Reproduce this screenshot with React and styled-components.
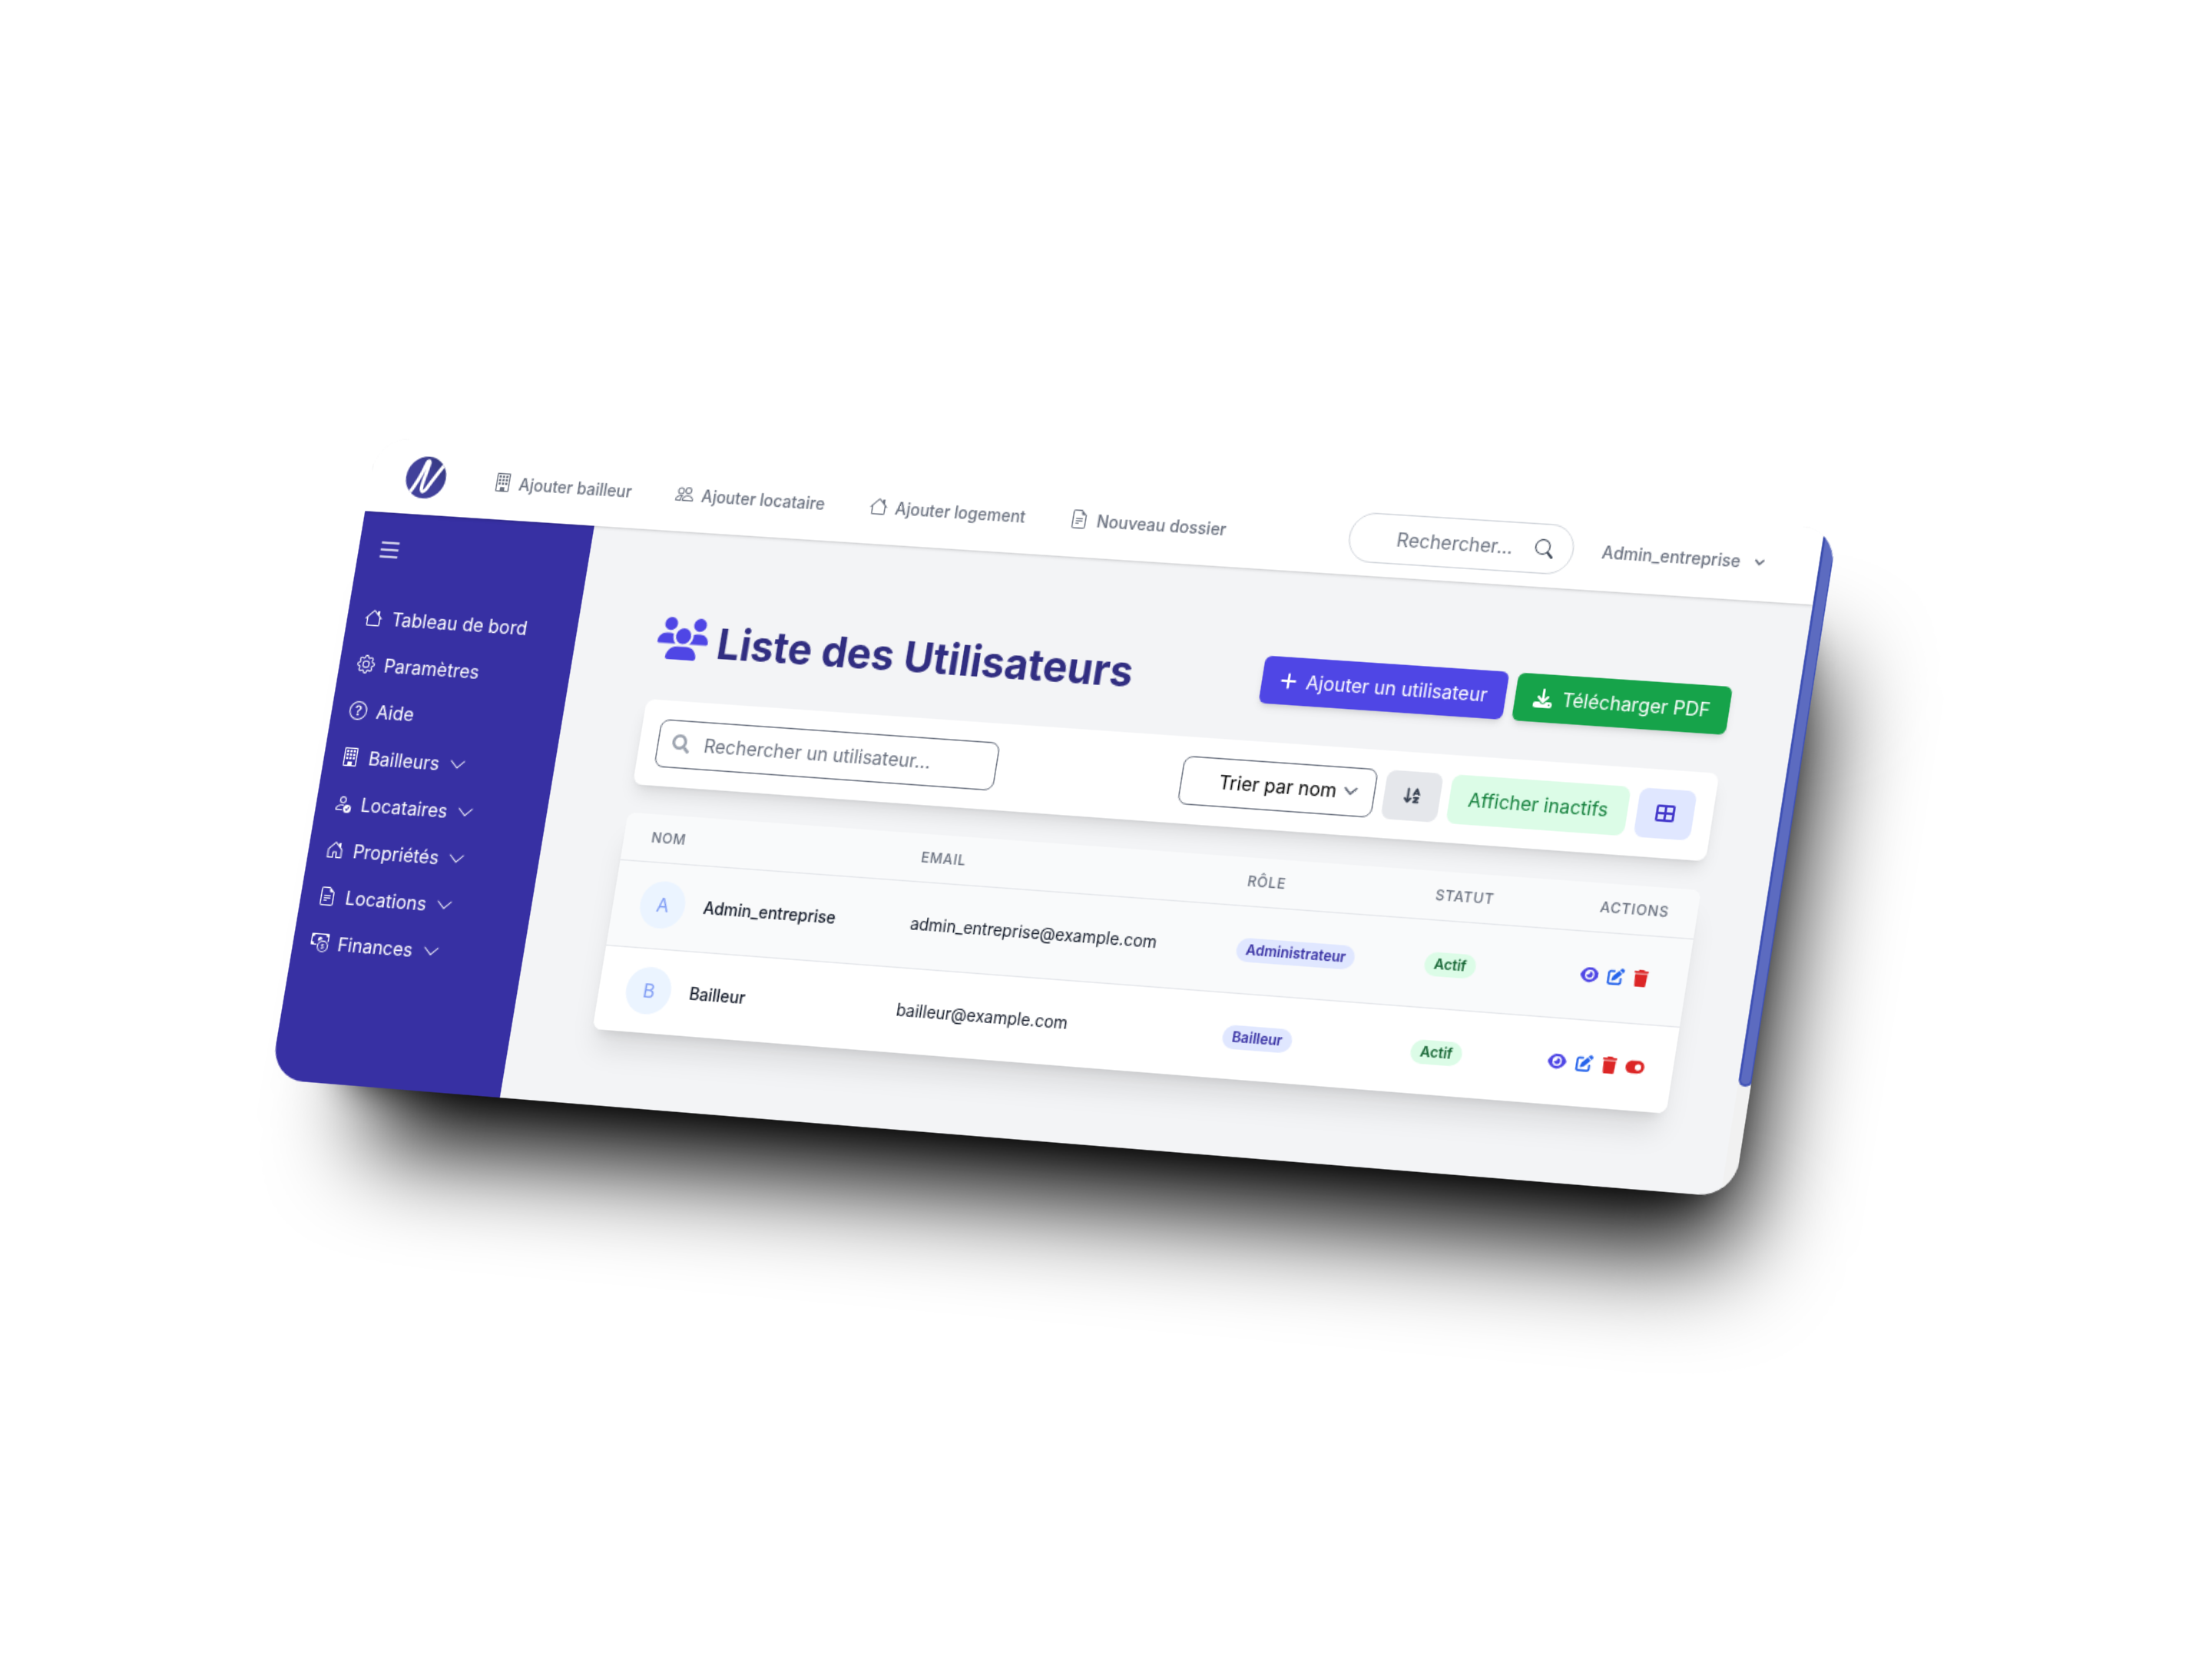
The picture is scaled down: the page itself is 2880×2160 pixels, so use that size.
import React from "react";
import styled, { createGlobalStyle, css } from "styled-components";
import {
  BsBuilding,
  BsCashCoin,
  BsChevronDown,
  BsFileEarmarkText,
  BsGear,
  BsHouse,
  BsHouseDoor,
  BsList,
  BsPeople,
  BsPersonCheck,
  BsQuestionCircle,
  BsSearch,
} from "react-icons/bs";
import { FaSearch } from "react-icons/fa";
import {
  FaArrowDownAZ,
  FaDownload,
  FaEye,
  FaPenToSquare,
  FaPlus,
  FaTableCellsLarge,
  FaToggleOn,
  FaTrash,
  FaUsers,
} from "react-icons/fa6";

const VIEW_W = 1270;
const NAV_H = 64;
const BODY_H = 490;

/* Screen positions of the corners of the area below the navbar. */
const CORNERS = {
  tl: [475.3, 665.3],
  tr: [2360.2, 787.3],
  br: [2240, 1557.7],
  bl: [351.8, 1404.9],
};

function projection({ tl, tr, br, bl }) {
  const [x0, y0] = tl;
  const [x1, y1] = tr;
  const [x2, y2] = br;
  const [x3, y3] = bl;
  const dx1 = x1 - x2;
  const dx2 = x3 - x2;
  const dx3 = x0 - x1 + x2 - x3;
  const dy1 = y1 - y2;
  const dy2 = y3 - y2;
  const dy3 = y0 - y1 + y2 - y3;
  const den = dx1 * dy2 - dx2 * dy1;
  const g = (dx3 * dy2 - dx2 * dy3) / den;
  const h = (dx1 * dy3 - dx3 * dy1) / den;
  const row = (p, q, r) => {
    const px = p / VIEW_W;
    const py = q / BODY_H;
    return [px, py, r - py * NAV_H];
  };
  const X = row(x1 - x0 + g * x1, x3 - x0 + h * x3, x0);
  const Y = row(y1 - y0 + g * y1, y3 - y0 + h * y3, y0);
  const W = row(g, h, 1);
  const k = W[2];
  const n = (v) => (v / k).toFixed(10);
  return `matrix3d(${n(X[0])},${n(Y[0])},0,${n(W[0])},${n(X[1])},${n(Y[1])},0,${n(
    W[1]
  )},0,0,1,0,${n(X[2])},${n(Y[2])},0,1)`;
}

const GlobalStyle = createGlobalStyle`
  *, *::before, *::after { box-sizing: border-box; }
  body { margin: 0; background: #fff; }
  button, input { font: inherit; }
  svg { display: block; flex: none; }
`;

const Stage = styled.div`
  width: 2880px;
  height: 2160px;
  overflow: hidden;
  background: #fff;
  font-family: Inter, "Liberation Sans", sans-serif;
  font-size: 16px;
  line-height: 24px;
  color: #111827;
`;

/* The cast shadow has a wide soft part and a tighter core under the window. */
const Browser = styled.div`
  position: relative;
  width: ${VIEW_W + 11}px;
  height: ${NAV_H + BODY_H}px;
  border-radius: 30px;
  transform-origin: 0 0;
  transform: ${projection(CORNERS)};

  &::before,
  &::after {
    content: "";
    position: absolute;
    z-index: -1;
    background: #000;
  }

  &::before {
    inset: 118px -7px -46px 96px;
    border-radius: 20px;
    filter: blur(43px);
  }

  &::after {
    inset: 88px 18px 6px 66px;
    border-radius: 24px;
    filter: blur(17px);
  }
`;

const Viewport = styled.div`
  display: flex;
  width: 100%;
  height: 100%;
  border-radius: 30px;
  overflow: hidden;
  background: #f3f4f6;
`;

const Page = styled.div`
  display: flex;
  flex-direction: column;
  width: ${VIEW_W}px;
  flex: none;
`;

const ScrollTrack = styled.div`
  flex: 1;
  overflow: hidden;
  background: #f1f1f1;
`;

const ScrollThumb = styled.div`
  width: 11.5px;
  height: 463px;
  border: 2px solid #3f51b5;
  border-top: 0;
  border-radius: 0 0 8px 8px;
  background: #5c6bc0;
`;

const Navbar = styled.header`
  position: relative;
  z-index: 1;
  display: flex;
  align-items: center;
  height: ${NAV_H}px;
  padding: 0 32px;
  background: #fff;
  box-shadow: 0 1px 3px rgba(0, 0, 0, 0.12), 0 1px 2px -1px rgba(0, 0, 0, 0.12);
`;

const NavLinks = styled.nav`
  display: flex;
  gap: 39.65px;
  margin-left: 43.6px;
  flex: 1;
`;

const NavLink = styled.a`
  display: flex;
  align-items: center;
  gap: 7px;
  font-size: 14px;
  line-height: 20px;
  font-weight: 500;
  color: #6b7280;

  svg {
    margin-top: -1px;
  }

  span {
    padding-top: 1px;
  }
`;

const NavSearch = styled.label`
  display: flex;
  align-items: center;
  justify-content: space-between;
  width: 193px;
  height: 42px;
  padding: 0 16px 0 40px;
  border: 1px solid #d1d5db;
  border-radius: 21px;
  color: #6b7280;

  svg {
    color: #374151;
  }
`;

const UserMenu = styled.div`
  display: flex;
  align-items: center;
  gap: 8px;
  margin-left: 12px;
  padding: 0 10px 0 12px;
  font-size: 14px;
  line-height: 20px;
  font-weight: 500;
  color: #6b7280;
`;

const Body = styled.div`
  display: flex;
  height: ${BODY_H}px;
`;

const Sidebar = styled.aside`
  width: 208.4px;
  flex: none;
  padding: 20px 16px 20px 16.4px;
  background: #3730a3;
  color: #fff;
`;

const Menu = styled.ul`
  display: flex;
  flex-direction: column;
  gap: 16px;
  margin: 35.3px 0 0;
  padding: 0;
  list-style: none;
`;

const MenuItem = styled.li`
  display: flex;
  align-items: center;
  gap: 8px;
  height: 24px;
  white-space: nowrap;
`;

const Main = styled.main`
  flex: 1;
  min-width: 0;
  padding: 72px 56px 0 72px;
`;

const TitleRow = styled.div`
  display: flex;
  align-items: center;
  justify-content: space-between;
  height: 40px;
`;

const Title = styled.h1`
  display: flex;
  align-items: center;
  gap: 8.4px;
  margin: 0;
  padding: 1px 0 0 0.8px;
  font-size: 36px;
  line-height: 40px;
  font-weight: 700;
  color: #312e81;
  white-space: nowrap;

  svg {
    width: 45px;
    height: 36px;
    margin-top: -2.5px;
    color: #4f46e5;
  }
`;

const ButtonGroup = styled.div`
  display: flex;
  gap: 8px;
`;

const SolidButton = styled.button`
  display: flex;
  align-items: center;
  gap: 8px;
  height: 40px;
  padding: 0 16px;
  border: 0;
  border-radius: 6px;
  background: ${(p) => p.$bg};
  color: #fff;
  white-space: nowrap;
  box-shadow: 0 4px 6px -1px rgba(0, 0, 0, 0.1), 0 2px 4px -2px rgba(0, 0, 0, 0.1);
`;

const PlusIcon = styled(FaPlus)`
  width: 14px;
  height: 16px;
`;

const Toolbar = styled.section`
  display: flex;
  align-items: center;
  justify-content: space-between;
  height: 73px;
  margin-top: 32px;
  padding: 0 16px;
  border-radius: 8px;
  background: #fff;
  box-shadow: 0 10px 15px -3px rgba(0, 0, 0, 0.1), 0 4px 6px -4px rgba(0, 0, 0, 0.1);
`;

const field = css`
  display: flex;
  align-items: center;
  height: 41.5px;
  border: 1px solid #6b7280;
  border-radius: 8px;
  background: #fff;
`;

const SearchField = styled.label`
  ${field}
  width: 300.5px;
  padding: 0 0 1px 11.5px;
  gap: 12.5px;
  color: #6b7280;

  svg {
    margin-top: -1px;
    color: #9ca3af;
  }
`;

const SortSelect = styled.div`
  ${field}
  width: 168px;
  justify-content: flex-end;
  padding: 0 7.6px 1px 0;
  color: #000;
`;

const ToolButton = styled.button`
  display: flex;
  align-items: center;
  height: 41.5px;
  padding: 0 16.2px 1px;
  border: 0;
  border-radius: 8px;
  background: ${(p) => p.$bg};
  color: ${(p) => p.$fg};
  white-space: nowrap;
`;

const Table = styled.section`
  border-radius: 8px;
  overflow: hidden;
  background: #fff;
`;

const TableCard = styled.div`
  margin-top: 24px;
  border-radius: 8px;
  box-shadow: 0 20px 25px -5px rgba(0, 0, 0, 0.1), 0 8px 10px -6px rgba(0, 0, 0, 0.1);
`;

const columns = css`
  display: grid;
  grid-template-columns: 239.5px 285.3px 162px 1fr;
  align-items: center;
  padding: 0 24px;
`;

const HeadRow = styled.div`
  ${columns}
  height: 41px;
  background: #f9fafb;
  border-bottom: 1px solid #e5e7eb;
  font-size: 12px;
  line-height: 16px;
  font-weight: 500;
  letter-spacing: 0.6px;
  text-transform: uppercase;
  color: #6b7280;
`;

const Row = styled.div`
  ${columns}
  height: ${(p) => (p.$hover ? 72.5 : 71.5)}px;
  padding-bottom: 0.8px;
  background: ${(p) => (p.$hover ? "#f9fafb" : "#fff")};
  border-bottom: ${(p) => (p.$hover ? "1px solid #e5e7eb" : "0")};
  font-size: 14px;
  line-height: 20px;
`;

const Person = styled.div`
  display: flex;
  align-items: center;
  gap: 16px;
  font-weight: 500;
  color: #111827;
`;

const Avatar = styled.span`
  display: flex;
  align-items: center;
  justify-content: center;
  width: 40px;
  height: 40px;
  border-radius: 50%;
  background: #ebf4ff;
  color: #7f9cf5;
  font-size: 16px;
  font-weight: 400;
`;

const BadgeCell = styled.div`
  display: flex;
  padding-top: 1.4px;
`;

const Badge = styled.span`
  padding: 0 8px;
  border-radius: 10px;
  background: ${(p) => p.$bg};
  color: ${(p) => p.$fg};
  font-size: 12px;
  line-height: 20px;
  font-weight: 600;
`;

const StatusCell = styled.div`
  display: flex;
  align-items: center;
  justify-content: space-between;
`;

const Actions = styled.div`
  display: flex;
  align-items: center;
  gap: 8px;
  padding: 0 ${(p) => (p.$inset ? 8.3 : 0)}px 0.5px 0;
`;

const ActionIcon = styled.span`
  display: flex;
  color: ${(p) => p.$color};

  svg {
    width: ${(p) => p.$w}px;
    height: 14px;
  }
`;

function Logo() {
  return (
    <svg width="36" height="36" viewBox="0 0 36 36">
      <defs>
        <clipPath id="disc">
          <circle cx="18" cy="18" r="18" />
        </clipPath>
        <linearGradient id="ink" x1="0" y1="1" x2="1" y2="0">
          <stop offset="0.55" stopColor="#41419a" />
          <stop offset="1" stopColor="#2f3676" />
        </linearGradient>
      </defs>
      <g clipPath="url(#disc)">
        <rect width="36" height="36" fill="url(#ink)" />
        <path
          d="M4.5 33 C9 26 14 15 16.6 6 C17.4 3 19.6 3 19.2 6 C18.3 13 14.6 24 15.6 28.6 C16.2 31 18.4 30.4 20 27.6 C25 18.5 28 14 35 3"
          fill="none"
          stroke="#fff"
          strokeWidth="3.1"
          strokeLinecap="round"
          strokeLinejoin="round"
        />
      </g>
    </svg>
  );
}

function SmallChevron() {
  return (
    <svg width="16" height="16" viewBox="0 0 20 20" fill="currentColor">
      <path d="M5.293 7.293a1 1 0 011.414 0L10 10.586l3.293-3.293a1 1 0 111.414 1.414l-4 4a1 1 0 01-1.414 0l-4-4a1 1 0 010-1.414z" />
    </svg>
  );
}

function SelectChevron() {
  return (
    <svg width="24" height="24" viewBox="0 0 20 20" fill="none" stroke="#6b7280" strokeWidth="1.5" strokeLinecap="round" strokeLinejoin="round">
      <path d="M6 8l4 4 4-4" />
    </svg>
  );
}

const NAV = [
  [BsBuilding, "Ajouter bailleur"],
  [BsPeople, "Ajouter locataire"],
  [BsHouse, "Ajouter logement"],
  [BsFileEarmarkText, "Nouveau dossier"],
];

const MENU = [
  [BsHouse, "Tableau de bord", false],
  [BsGear, "Paramètres", false],
  [BsQuestionCircle, "Aide", false],
  [BsBuilding, "Bailleurs", true],
  [BsPersonCheck, "Locataires", true],
  [BsHouseDoor, "Propriétés", true],
  [BsFileEarmarkText, "Locations", true],
  [BsCashCoin, "Finances", true],
];

const USERS = [
  { name: "Admin_entreprise", email: "admin_entreprise@example.com", role: "Administrateur", toggle: false },
  { name: "Bailleur", email: "bailleur@example.com", role: "Bailleur", toggle: true },
];

export default function App() {
  return (
    <Stage>
      <GlobalStyle />
      <Browser>
        <Viewport>
          <Page>
            <Navbar>
              <Logo />
              <NavLinks>
                {NAV.map(([Icon, label]) => (
                  <NavLink key={label}>
                    <Icon size={16} />
                    <span>{label}</span>
                  </NavLink>
                ))}
              </NavLinks>
              <NavSearch>
                <span>Rechercher...</span>
                <BsSearch size={16} />
              </NavSearch>
              <UserMenu>
                Admin_entreprise
                <SmallChevron />
              </UserMenu>
            </Navbar>
            <Body>
              <Sidebar>
                <BsList size={24} />
                <Menu>
                  {MENU.map(([Icon, label, open]) => (
                    <MenuItem key={label}>
                      <Icon size={16} />
                      {label}
                      {open && <BsChevronDown size={16} />}
                    </MenuItem>
                  ))}
                </Menu>
              </Sidebar>
              <Main>
                <TitleRow>
                  <Title>
                    <FaUsers />
                    Liste des Utilisateurs
                  </Title>
                  <ButtonGroup>
                    <SolidButton $bg="#4f46e5">
                      <PlusIcon />
                      Ajouter un utilisateur
                    </SolidButton>
                    <SolidButton $bg="#16a34a">
                      <FaDownload size={16} />
                      Télécharger PDF
                    </SolidButton>
                  </ButtonGroup>
                </TitleRow>
                <Toolbar>
                  <SearchField>
                    <FaSearch size={16} />
                    Rechercher un utilisateur...
                  </SearchField>
                  <ButtonGroup>
                    <SortSelect>
                      Trier par nom
                      <SelectChevron />
                    </SortSelect>
                    <ToolButton $bg="#e5e7eb" $fg="#374151">
                      <FaArrowDownAZ size={16} />
                    </ToolButton>
                    <ToolButton $bg="#dcfce7" $fg="#15803d">
                      Afficher inactifs
                    </ToolButton>
                    <ToolButton $bg="#e0e7ff" $fg="#4338ca">
                      <FaTableCellsLarge size={16} />
                    </ToolButton>
                  </ButtonGroup>
                </Toolbar>
                <TableCard>
                  <Table>
                    <HeadRow>
                      <span>Nom</span>
                      <span>Email</span>
                      <span>Rôle</span>
                      <StatusCell>
                        <span>Statut</span>
                        <span>Actions</span>
                      </StatusCell>
                    </HeadRow>
                    {USERS.map((u, i) => (
                      <Row key={u.name} $hover={i === 0}>
                        <Person>
                          <Avatar>{u.name[0]}</Avatar>
                          {u.name}
                        </Person>
                        <span>{u.email}</span>
                        <BadgeCell>
                          <Badge $bg="#e0e7ff" $fg="#3730a3">{u.role}</Badge>
                        </BadgeCell>
                        <StatusCell>
                          <BadgeCell>
                            <Badge $bg="#dcfce7" $fg="#166534">Actif</Badge>
                          </BadgeCell>
                          <Actions $inset={!u.toggle}>
                            <ActionIcon $color="#4f46e5" $w={15.75}><FaEye /></ActionIcon>
                            <ActionIcon $color="#2563eb" $w={14}><FaPenToSquare /></ActionIcon>
                            <ActionIcon $color="#dc2626" $w={12.25}><FaTrash /></ActionIcon>
                            {u.toggle && (
                              <ActionIcon $color="#dc2626" $w={15.75}><FaToggleOn /></ActionIcon>
                            )}
                          </Actions>
                        </StatusCell>
                      </Row>
                    ))}
                  </Table>
                </TableCard>
              </Main>
            </Body>
          </Page>
          <ScrollTrack>
            <ScrollThumb />
          </ScrollTrack>
        </Viewport>
      </Browser>
    </Stage>
  );
}
